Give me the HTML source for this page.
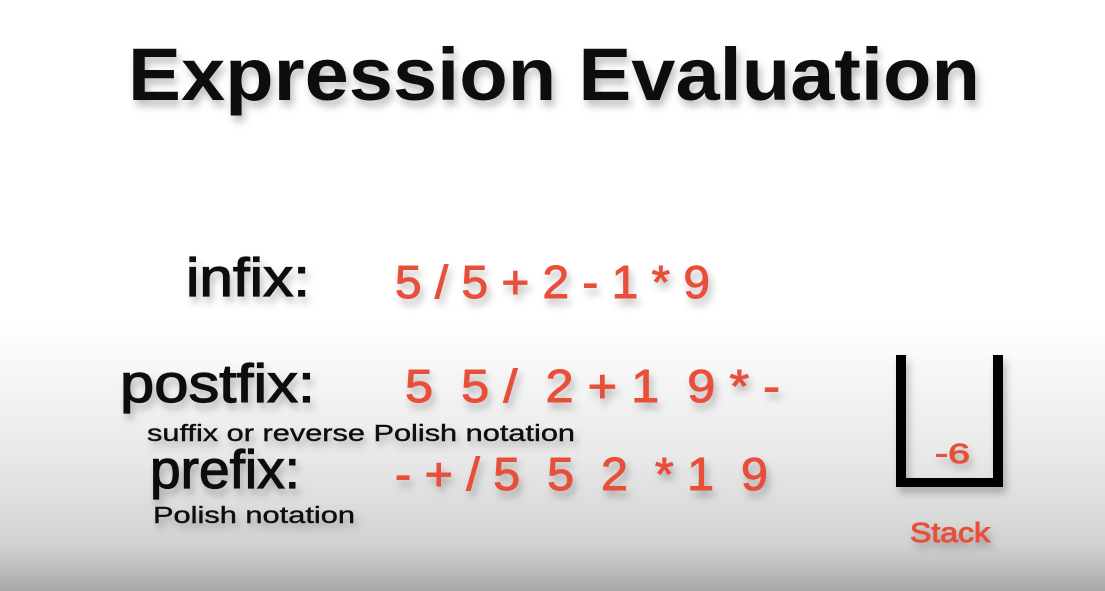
<!DOCTYPE html>
<html><head><meta charset="utf-8"><style>
html,body{margin:0;padding:0;}
body{width:1105px;height:591px;overflow:hidden;background:linear-gradient(to bottom,#fff 0px,#fff 320px,#e8e8e8 460px,#d2d2d2 545px,#bcbcbc 570px,#a8a8a8 591px);}
svg{position:absolute;left:0;top:0;}
text{font-family:"Liberation Sans",sans-serif;}
</style></head><body>
<svg width="1105" height="591" viewBox="0 0 1105 591">
<defs><filter id="sh" x="-5%" y="-20%" width="110%" height="150%"><feDropShadow dx="3" dy="6" stdDeviation="4" flood-color="#000" flood-opacity="0.25"/></filter></defs>
<g filter="url(#sh)">
<text x="128" y="100" font-size="74" font-weight="bold" fill="#111" textLength="852" lengthAdjust="spacingAndGlyphs">Expression Evaluation</text>
<g fill="#111" stroke="#111" stroke-width="1.2">
<text x="186" y="296" font-size="54" textLength="124" lengthAdjust="spacingAndGlyphs">infix:</text>
<text x="120" y="402" font-size="54" textLength="195" lengthAdjust="spacingAndGlyphs">postfix:</text>
<text x="150" y="488" font-size="54" textLength="150" lengthAdjust="spacingAndGlyphs">prefix:</text>
</g>
<g fill="#111" stroke="#111" stroke-width="0.4">
<text x="147" y="441" font-size="23" textLength="428" lengthAdjust="spacingAndGlyphs">suffix or reverse Polish notation</text>
<text x="153" y="523" font-size="23" textLength="202" lengthAdjust="spacingAndGlyphs">Polish notation</text>
</g>
<g fill="#e8503a" stroke="#e8503a" stroke-width="1" font-size="46">
<text x="395" y="298" xml:space="preserve" textLength="315" lengthAdjust="spacingAndGlyphs">5 / 5 + 2 - 1 * 9</text>
<text x="405" y="402" xml:space="preserve" textLength="375" lengthAdjust="spacingAndGlyphs">5  5 /  2 + 1  9 * -</text>
<text x="395" y="490" xml:space="preserve" textLength="373" lengthAdjust="spacingAndGlyphs">- + / 5  5  2  * 1  9</text>
<text x="935" y="463" font-size="28" textLength="35" lengthAdjust="spacingAndGlyphs">-6</text>
<text x="910" y="542" font-size="28" textLength="80" lengthAdjust="spacingAndGlyphs">Stack</text>
</g>
<path d="M896 355 V487 H1003 V355 H993 V478 H906 V355 Z" fill="#000"/>
</g>
</svg>
</body></html>
